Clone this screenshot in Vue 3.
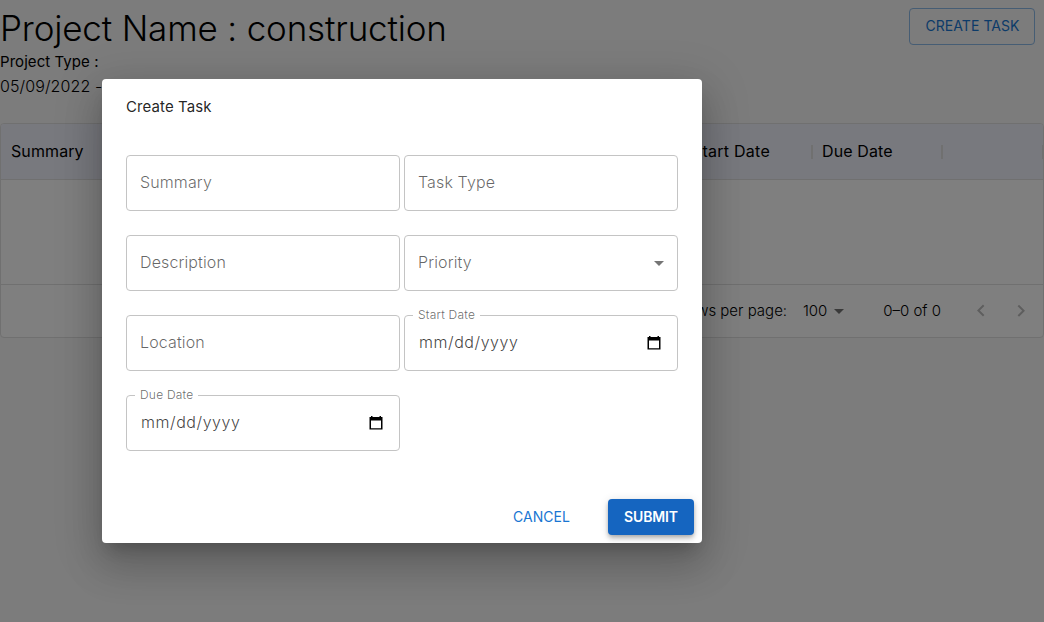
<script setup>
const fields = [
  { label: 'Summary' },
  { label: 'Task Type' },
  { label: 'Description' },
  { label: 'Priority', kind: 'select' },
  { label: 'Location' },
  { label: 'Start Date', kind: 'date' },
  { label: 'Due Date', kind: 'date' },
]
</script>

<template>
  <div class="page">
    <header class="head">
      <div>
        <h1>Project Name : construction</h1>
        <p class="type">Project Type :</p>
        <p class="dates">05/09/2022 -</p>
      </div>
      <button class="create">CREATE TASK</button>
    </header>

    <section class="grid">
      <div class="columns">
        <div class="col summary">Summary</div>
        <div class="col start">Start Date<i></i></div>
        <div class="col due">Due Date<i></i></div>
        <div class="col last"><i></i></div>
      </div>
      <div class="rows"></div>
      <footer class="pager">
        <span class="per">Rows per page:</span>
        <span class="count">100</span>
        <svg class="caret" viewBox="0 0 24 24"><path d="M7 10l5 5 5-5z" /></svg>
        <span class="range">0–0 of 0</span>
        <svg class="arrow" viewBox="0 0 24 24"><path d="M15.41 16.09l-4.58-4.59 4.58-4.59L14 5.5l-6 6 6 6z" /></svg>
        <svg class="arrow" viewBox="0 0 24 24"><path d="M8.59 16.34l4.58-4.59-4.58-4.59L10 5.75l6 6-6 6z" /></svg>
      </footer>
    </section>
  </div>

  <div class="backdrop">
    <div class="dialog">
      <h2>Create Task</h2>
      <div class="form">
        <div v-for="f in fields" :key="f.label" class="field">
          <fieldset v-if="f.kind === 'date'">
            <legend>{{ f.label }}</legend>
            <div class="date">
              <span>mm/dd/yyyy</span>
              <svg viewBox="0 0 16 16"><path fill-rule="evenodd" d="M3 1h1.500v1h7V1H13v1h1.500v12.500h-13V2H3zM3 5.500V13.300h10V5.500z" /></svg>
            </div>
          </fieldset>
          <div v-else class="box">
            <span>{{ f.label }}</span>
            <svg v-if="f.kind === 'select'" viewBox="0 0 24 24"><path d="M7 10l5 5 5-5z" /></svg>
          </div>
        </div>
      </div>
      <div class="actions">
        <button class="cancel">CANCEL</button>
        <button class="submit">SUBMIT</button>
      </div>
    </div>
  </div>
</template>

<style>
body {
  background: #f8f8f8;
}
</style>

<style scoped>
* {
  box-sizing: border-box;
}
.page,
.backdrop {
  font-family: Inter, "Liberation Sans", sans-serif;
  font-weight: 300;
}
.page {
  height: 622px;
  overflow: hidden;
  background: #f8f8f8;
  color: #000;
}
h1,
h2,
p {
  margin: 0;
}
button {
  font-family: inherit;
  font-size: 14px;
  line-height: 24.5px;
  letter-spacing: 0.05px;
  border-radius: 4px;
  border: 0;
  background: none;
  padding: 0;
}
.head {
  display: flex;
  justify-content: space-between;
  align-items: flex-start;
  height: 123px;
}
h1 {
  font-size: 35px;
  font-weight: 300;
  line-height: 42px;
  letter-spacing: -0.17px;
  padding-top: 7px;
  padding-bottom: 1px;
}
.type {
  font-size: 15px;
  font-weight: 400;
  line-height: 24px;
  letter-spacing: 0.06px;
}
.dates {
  font-size: 16px;
  line-height: 24px;
  letter-spacing: 0.1px;
}
.create {
  width: 126px;
  height: 37px;
  margin: 8px 9px 0 0;
  padding-left: 1px;
  border: 1px solid #8cbae8;
  color: #1976d2;
  font-weight: 400;
}
.grid {
  height: 215px;
  border: 1px solid #e0e0e0;
  border-radius: 4px;
  background: #fff;
  overflow: hidden;
}
.columns {
  display: flex;
  height: 56px;
  background: #f0f2fc;
  font-size: 16px;
  font-weight: 400;
  line-height: 55px;
  letter-spacing: 0.1px;
  border-bottom: 1px solid #e0e0e0;
}
.col {
  display: flex;
  justify-content: space-between;
  align-items: center;
  padding-left: 10px;
}
.col i {
  width: 2px;
  height: 14px;
  margin-right: -1px;
  background: #e0e0e0;
}
.summary { width: 681px; }
.start {
  width: 130px;
  letter-spacing: 0.25px;
}
.due { width: 130px; }
.last { flex: 1; justify-content: flex-end; }
.rows {
  height: 105px;
  border-bottom: 1px solid #e0e0e0;
}
.pager {
  display: flex;
  align-items: center;
  justify-content: flex-end;
  height: 52px;
  padding-right: 10px;
  font-size: 15px;
}
.per,
.count,
.range { padding-bottom: 2px; }
.count {
  margin-left: 16px;
  letter-spacing: -0.1px;
}
.caret {
  width: 24px;
  height: 24px;
  fill: #757575;
}
.range { margin: 0 28px 0 32px; }
.arrow {
  width: 24px;
  height: 24px;
  fill: #bdbdbd;
}
.arrow + .arrow { margin-left: 16px; }
.backdrop {
  position: absolute;
  inset: 0;
  display: flex;
  align-items: center;
  justify-content: center;
  width: 1044px;
  height: 622px;
  padding-right: 240px;
  background: rgba(0, 0, 0, 0.5);
}
.dialog {
  display: flex;
  flex-direction: column;
  width: 600px;
  height: 464px;
  background: #fff;
  border-radius: 4px;
  color: rgba(0, 0, 0, 0.87);
  box-shadow: 0 11px 15px -7px rgba(0, 0, 0, 0.2),
    0 24px 38px 3px rgba(0, 0, 0, 0.14),
    0 9px 46px 8px rgba(0, 0, 0, 0.12);
}
h2 {
  font-size: 15px;
  font-weight: 400;
  line-height: 24px;
  letter-spacing: 0.1px;
  padding: 16px 24px;
}
.form {
  display: grid;
  grid-template-columns: 274px 274px;
  gap: 24px 4px;
  padding: 20px 24px 0;
}
.field {
  height: 56px;
  font-size: 16px;
  letter-spacing: 0.12px;
  color: rgba(0, 0, 0, 0.6);
}
.box {
  display: flex;
  align-items: center;
  justify-content: space-between;
  height: 56px;
  border: 1px solid #c4c4c4;
  border-radius: 4px;
  padding: 0 6px 2px 13px;
}
.box svg {
  width: 24px;
  height: 24px;
  margin-top: 2px;
  fill: #757575;
}
fieldset {
  height: 61px;
  margin: -5px 0 0;
  padding: 0 8px;
  border: 1px solid #c4c4c4;
  border-radius: 4px;
  min-width: 0;
}
legend {
  height: 11px;
  padding: 0 5px;
  font-size: 12px;
  line-height: 9px;
  letter-spacing: 0.22px;
}
.date {
  display: flex;
  align-items: center;
  justify-content: space-between;
  height: 43px;
  padding: 0 7px 0 6px;
  color: rgba(0, 0, 0, 0.75);
  letter-spacing: 0.55px;
}
.date span { padding-bottom: 2px; }
.date svg {
  width: 16px;
  height: 16px;
  fill: #000;
}
.actions {
  display: flex;
  justify-content: flex-end;
  margin-top: auto;
  padding: 8px;
}
.cancel {
  width: 73px;
  height: 36px;
  margin-right: 30px;
  color: #1976d2;
  font-weight: 400;
}
.submit {
  width: 86px;
  height: 36px;
  background: #1565c0;
  color: #fff;
  font-weight: 600;
  letter-spacing: -0.15px;
  box-shadow: 0 2px 4px -1px rgba(0, 0, 0, 0.2),
    0 4px 5px rgba(0, 0, 0, 0.14),
    0 1px 10px rgba(0, 0, 0, 0.12);
}
</style>
